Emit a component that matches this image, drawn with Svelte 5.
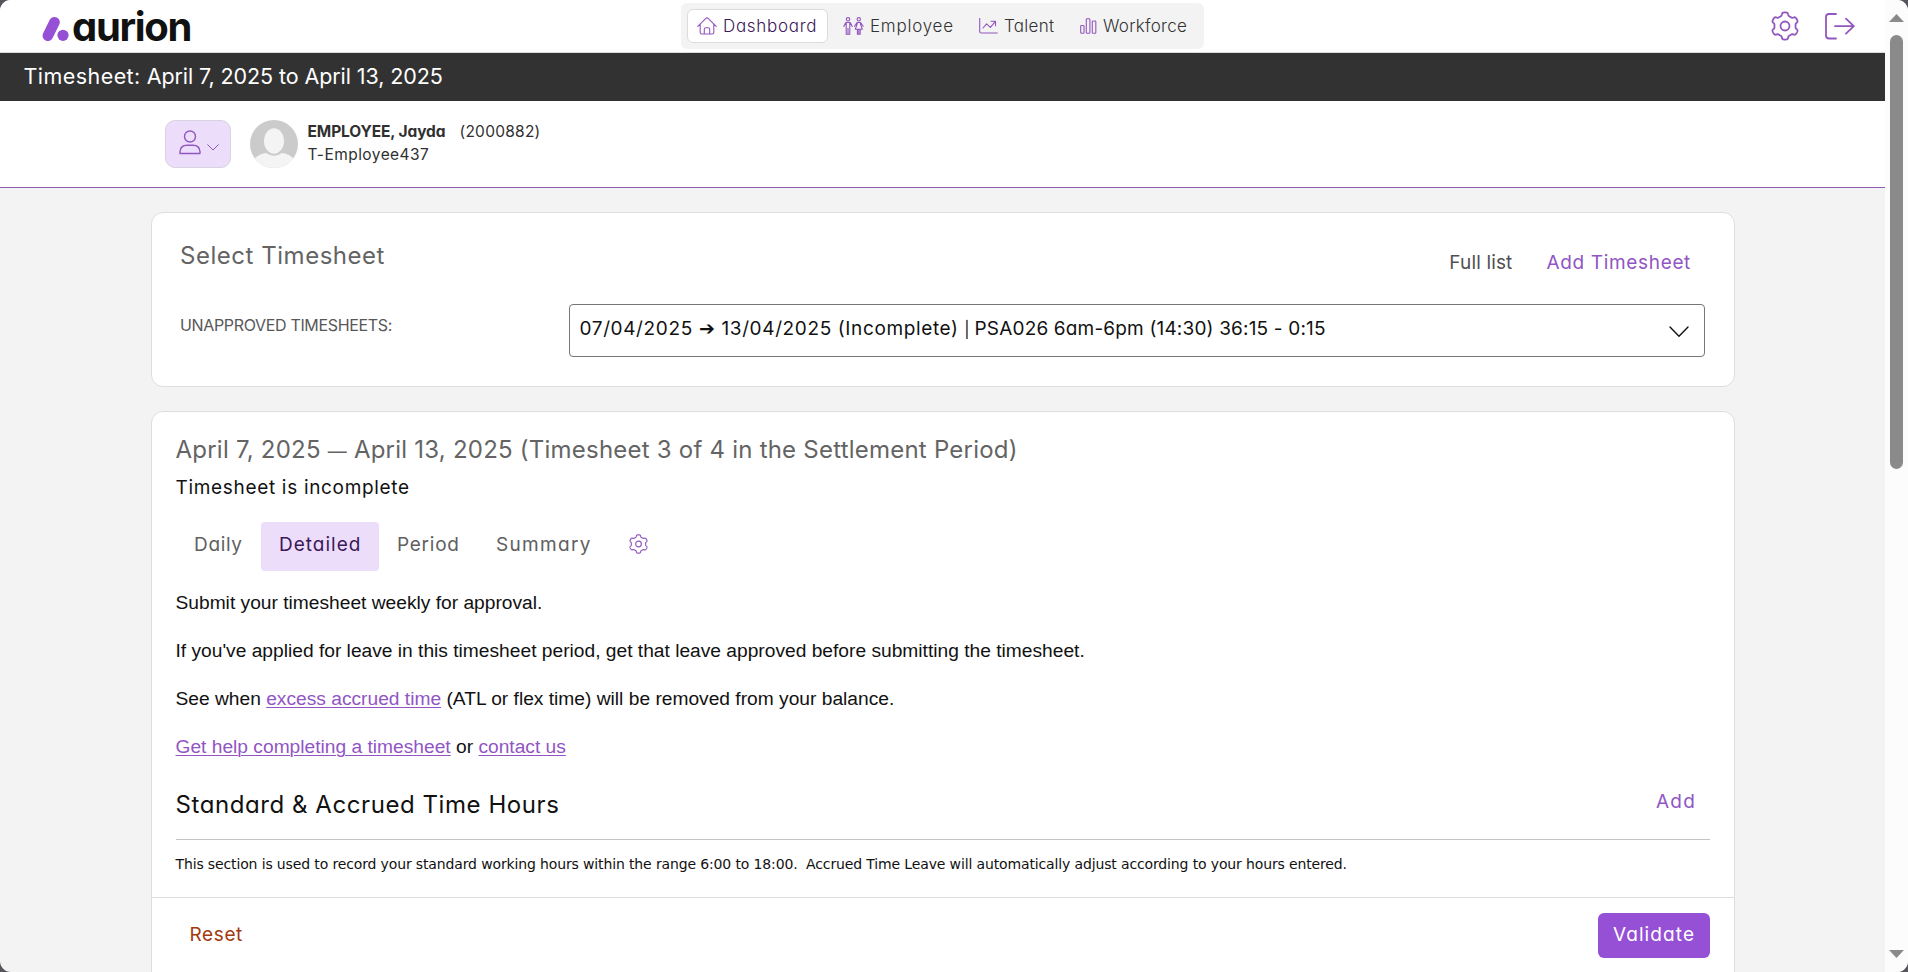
<script>
  // Outline of a six-toothed cog in a 28 x 28 box.
  function cog(radius) {
    const points = [];
    for (let i = 0; i < 180; i++) {
      const a = (i / 180) * Math.PI * 2;
      const r = radius * (0.88 + 0.11 * Math.tanh(2.6 * Math.cos(6 * a)));
      points.push(`${(14 + r * Math.sin(a)).toFixed(2)} ${(14 - r * Math.cos(a)).toFixed(2)}`);
    }
    return `M${points.join('L')}Z`;
  }
  const cogPath = cog(13.7);

  const tabs = [
    { id: 'daily', label: 'Daily' },
    { id: 'detailed', label: 'Detailed' },
    { id: 'period', label: 'Period' },
    { id: 'summary', label: 'Summary' }
  ];
  let active = $state('detailed');
</script>

<div class="window">
  <div class="content">
    <header class="top">
      <div class="logo">
        <svg width="28" height="26" viewBox="0 0 28 26">
          <path d="M5.9 19.7L12.5 6.200" stroke="#9650d6" stroke-width="10.6" stroke-linecap="round" />
          <circle cx="21" cy="19.300" r="5.6" fill="#9650d6" />
        </svg>
        <span>aurion</span>
      </div>
      <nav>
        <a class="item current" href="#dashboard">
          <svg width="20" height="18" viewBox="0 0 20 18"><path d="M.8 9.3L8.9 1.3q1.1-.9 2.2 0L19.2 9.3M3.2 7.3V15.500q0 1.500 1.500 1.500H15.300q1.500 0 1.500-1.500V7.300M7.300 17V12.200q0-1.400 1.400-1.400h2.600q1.400 0 1.400 1.400V17" /></svg>
          <span class="t-dash">Dashboard</span>
        </a>
        <a class="item emp" href="#employee">
          <svg width="21" height="18" viewBox="0 0 21 18"><circle cx="5" cy="2.300" r="1.700" /><circle cx="15.800" cy="2.300" r="1.700" /><path d="M.8 9.500L2.800 5.500H7.200L9.200 9.500M3.200 6V17.300H5V11.300M6.800 6V17.300H5M11.500 9.300L14 5.500H17.600L20.200 9.300M14.300 6.500L12.300 12.300H19.300L17.300 6.500M14.400 12.500V17.300H17.200V12.500M15.800 12.500V17" /></svg>
          <span class="t-emp">Employee</span>
        </a>
        <a class="item tal" href="#talent">
          <svg width="19" height="16" viewBox="0 0 19 16"><path d="M.7.3V13.500q0 1.500 1.500 1.500H18.300M4 10L7.600 5.800L11.400 9.400L16.200 3.600M12 3.300H16.500V7.800" /></svg>
          <span class="t-tal">Talent</span>
        </a>
        <a class="item wrk" href="#workforce">
          <svg width="17" height="16" viewBox="0 0 17 16"><rect x=".7" y="7.500" width="3.300" height="7.700" rx=".8" /><rect x="6.300" y=".7" width="3.600" height="14.500" rx=".8" /><rect x="12.300" y="3" width="3.500" height="12.200" rx=".8" /></svg>
          <span class="t-wrk">Workforce</span>
        </a>
      </nav>
      <div class="actions">
        <svg width="28" height="30" viewBox="0 0 28 28"><path d={cogPath} /><circle cx="14" cy="14" r="4.500" /></svg>
        <svg width="30" height="27" viewBox="0 0 30 27"><path d="M11 1H4Q1 1 1 4V22.500Q1 25.500 4 25.500H11M10 13.200H28.500M21 5.700L28.800 13.200L21 20.700" /></svg>
      </div>
    </header>

    <div class="title"><span>Timesheet:</span> April 7, 2025 to April 13, 2025</div>

    <section class="profile">
      <button class="user" aria-label="Select employee">
        <svg width="22" height="25" viewBox="0 0 22 25"><circle cx="11" cy="6.500" r="5.500" stroke-width="1.400" /><path d="M1 23.500V21.500Q1.500 15.200 8 15.200H14Q20.500 15.200 21 21.500V23.500Z" stroke-width="1.400" /></svg>
        <svg class="chev" width="12" height="7" viewBox="0 0 12 7"><path d="M.7.7L6 6L11.300.7" /></svg>
      </button>
      <svg class="avatar" width="48" height="48" viewBox="0 0 48 48">
        <clipPath id="disc"><circle cx="24" cy="24" r="24" /></clipPath>
        <g clip-path="url(#disc)">
          <rect width="48" height="48" fill="#cbcbcb" />
          <path d="M3 50V40Q8 34 16 33Q24 38.500 32 33Q40 34 45 40V50Z" fill="#f4f4f4" />
          <ellipse cx="24" cy="21" rx="10.800" ry="13.500" fill="#f4f4f4" stroke="#cbcbcb" stroke-width="1.600" />
        </g>
      </svg>
      <div class="who">
        <div><strong>EMPLOYEE, Jayda</strong><span class="num">(2000882)</span></div>
        <div class="login">T-Employee437</div>
      </div>
    </section>

    <main>
      <section class="card picker">
        <div class="head">
          <h2>Select Timesheet</h2>
          <div class="links"><a class="full" href="#list">Full list</a><a class="addts" href="#add">Add Timesheet</a></div>
        </div>
        <div class="field">
          <span class="label">UNAPPROVED TIMESHEETS:</span>
          <div class="select">
            <div class="value"><span class="range">07/04/2025 ➔ 13/04/2025 (Incomplete)</span> <span class="bar">|</span> <span>PSA026 6am-6pm (14:30) 36:15 - 0:15</span></div>
            <svg width="20" height="12" viewBox="0 0 20 12"><path d="M1 1L10 10.300L19 1" /></svg>
          </div>
        </div>
      </section>

      <section class="card sheet">
        <div class="body">
          <h2>April 7, 2025 <span class="dash">—</span> April 13, 2025 (Timesheet 3 of 4 in the Settlement Period)</h2>
          <p class="status">Timesheet is incomplete</p>
          <div class="tabs">
            {#each tabs as tab}
              <button class="tab {tab.id}" class:on={active === tab.id} onclick={() => (active = tab.id)}>{tab.label}</button>
            {/each}
            <svg width="19" height="20" viewBox="0 0 28 28"><path d={cogPath} /><circle cx="14" cy="14" r="4.200" /></svg>
          </div>
          <div class="notes">
            <p>Submit your timesheet weekly for approval.</p>
            <p>If you've applied for leave in this timesheet period, get that leave approved before submitting the timesheet.</p>
            <p>See when <a href="#excess">excess accrued time</a> (ATL or flex time) will be removed from your balance.</p>
            <p><a href="#help">Get help completing a timesheet</a> or <a href="#contact">contact us</a></p>
          </div>
          <div class="hours">
            <h3>Standard &amp; Accrued Time Hours</h3>
            <a href="#add-hours">Add</a>
          </div>
          <p class="small">This section is used to record your standard working hours within the range 6:00 to 18:00.&nbsp; Accrued Time Leave will automatically adjust according to your hours entered.</p>
        </div>
        <footer>
          <button class="reset">Reset</button>
          <button class="validate">Validate</button>
        </footer>
      </section>
    </main>
  </div>

  <div class="scrollbar">
    <svg width="15" height="8" viewBox="0 0 15 8"><path d="M0 8L7.500 0L15 8Z" /></svg>
    <div class="track"><div class="thumb"></div></div>
    <svg width="15" height="8" viewBox="0 0 15 8"><path d="M0 0L7.500 8L15 0Z" /></svg>
  </div>
</div>

<style>
  :global(body) { margin: 0; background: #56555c; overflow: hidden; }
  .window, .window * { box-sizing: border-box; }
  .window { display: flex; height: 972px; border-radius: 11px; overflow: hidden; background: #f3f3f3; font-family: Inter, "Liberation Sans", sans-serif; font-feature-settings: "cv11"; font-weight: 390; color: #111; font-size: 19px; }
  svg { display: block; flex: none; fill: none; stroke: #9257bf; stroke-width: 1.3; stroke-linecap: round; stroke-linejoin: round; }
  button { font: inherit; font-feature-settings: inherit; border: 0; background: none; padding: 0; color: inherit; cursor: pointer; }
  a { color: #9155c4; text-decoration: none; }
  h2, h3, p { margin: 0; font-weight: inherit; }
  .content { flex: 1; min-width: 0; display: flex; flex-direction: column; }

  .top { flex: none; height: 53px; background: #fff; border-bottom: 1px solid #d8dddb; display: grid; grid-template-columns: 1fr 523px 1fr; align-items: start; }
  .logo { display: flex; align-items: flex-start; padding: 16px 0 0 42px; }
  .logo svg { stroke: none; }
  .logo span { margin: -14.500px 0 0 2px; font-size: 40px; line-height: 50px; height: 50px; font-weight: 700; letter-spacing: -1.3px; color: #111; }
  nav { height: 46px; margin-top: 3px; border-radius: 6px; background: #f3f3f3; display: flex; align-items: center; padding-left: 6px; font-size: 17px; font-weight: 360; }
  .item { display: flex; align-items: center; height: 34px; color: #333; white-space: nowrap; }
  .item svg { stroke-width: 1.1; }
  .item span { padding-left: 6px; }
  .current { width: 141px; padding-left: 9px; border: 1px solid #dcdcdc; border-radius: 6px; background: #fff; color: #3c1859; }
  .emp { margin-left: 15px; width: 136px; }
  .tal { width: 101px; }
  .t-dash { letter-spacing: .7px; }
  .t-emp { letter-spacing: .75px; }
  .t-tal { letter-spacing: .3px; }
  .t-wrk { letter-spacing: .27px; }
  .actions { justify-self: end; display: flex; align-items: center; gap: 26px; height: 52px; padding-right: 30px; }
  .actions svg { stroke-width: 1.8; }

  .title { flex: none; height: 48px; padding: 0 0 1px 23.500px; background: #323232; color: #fff; font-size: 21.500px; font-weight: 400; line-height: 47px; letter-spacing: -.09px; }
  .title span { letter-spacing: .44px; }
  .profile { flex: none; height: 87px; background: #fff; border-bottom: 1px solid #8f5bb0; display: flex; padding: 19px 0 0 165px; font-size: 15.500px; font-weight: 375; color: #303030; }
  .user { width: 66px; height: 48px; border: 1px solid #d9d2e2; border-radius: 10px; background: #ecdefb; display: flex; align-items: flex-start; padding: 9px 0 0 13px; gap: 6px; }
  .chev { margin-top: 14px; stroke-width: 1; }
  .avatar { margin-left: 19px; stroke: none; }
  .who { padding-left: 9.500px; line-height: 23px; }
  .who strong { font-weight: 650; letter-spacing: -.1px; }
  .num { padding-left: 14px; letter-spacing: .26px; }
  .login { letter-spacing: .45px; }

  main { padding: 24px 150px 0 151px; display: flex; flex-direction: column; gap: 24px; }
  .card { background: #fff; border: 1px solid #dedede; border-radius: 12px; }
  .picker { height: 175px; padding: 0 29px 0 28px; }
  .head { height: 91px; display: flex; justify-content: space-between; }
  .head h2 { padding-top: 28px; font-size: 24px; line-height: 30px; letter-spacing: .53px; color: #646464; }
  .links { padding: 35px 14px 0 0; display: flex; gap: 34px; line-height: 30px; }
  .full { color: #505050; letter-spacing: .15px; }
  .addts { letter-spacing: .66px; }
  .field { display: flex; justify-content: space-between; }
  .label { padding-top: 11px; font-size: 16px; line-height: 20px; letter-spacing: -.34px; color: #585858; }
  .select { width: 1136px; height: 53px; border: 1px solid #777; border-radius: 4px; display: flex; justify-content: space-between; padding: 0 15px 0 9.500px; line-height: 48px; letter-spacing: .17px; white-space: nowrap; }
  .range { letter-spacing: .63px; }
  .bar { font-size: 16px; line-height: 0; letter-spacing: -.5px; }
  .select svg { margin-top: 21px; stroke: #111; stroke-width: 1.400; }

  .sheet { height: 700px; }
  .body { height: 485px; padding: 23px 24px 0 23.500px; }
  .body h2 { font-size: 24px; line-height: 30px; letter-spacing: .225px; color: #646464; }
  .dash { font-size: 19px; line-height: 0; }
  .status { margin-top: 9px; line-height: 28px; letter-spacing: .68px; }
  .tabs { margin-top: 20px; height: 49px; display: flex; }
  .tab { height: 49px; padding: 0 0 5px 18.500px; text-align: left; color: #606060; border-radius: 4px; }
  .tab.on { background: #ecdefb; color: #3c1859; }
  .daily { width: 85px; letter-spacing: .68px; }
  .detailed { width: 118px; letter-spacing: 1px; }
  .period { width: 99px; letter-spacing: .75px; }
  .summary { width: 151px; letter-spacing: 1.320px; }
  .tabs svg { margin-top: 12px; stroke-width: 1.700; }
  .notes { margin-top: 20px; display: flex; flex-direction: column; gap: 24px; font: 19.200px/24px "Liberation Sans", Arial, sans-serif; }
  .notes a { text-decoration: underline; text-decoration-thickness: 1px; text-underline-offset: 2px; }
  .hours { margin-top: 31px; height: 50px; border-bottom: 1px solid #c4c4c4; display: flex; justify-content: space-between; padding-right: 14px; }
  .hours h3 { font-size: 24px; line-height: 30px; letter-spacing: .57px; }
  .hours a { line-height: 24px; letter-spacing: 1.200px; }
  .small { margin-top: 14px; font: 14px/20px "DejaVu Sans", Verdana, sans-serif; letter-spacing: -.137px; white-space: nowrap; }
  footer { border-top: 1px solid #dedede; padding: 15px 24px 0 37.500px; display: flex; justify-content: space-between; }
  footer button { height: 45px; padding-bottom: 2px; }
  .reset { color: #a33a10; letter-spacing: .62px; }
  .validate { width: 112px; border-radius: 6px; background: #9650d6; color: #fff; letter-spacing: 1.100px; }

  .scrollbar { flex: none; width: 23px; background: #fcfcfc; display: flex; flex-direction: column; align-items: center; padding: 14px 0; }
  .scrollbar svg { fill: #8a8a8a; stroke: none; }
  .track { flex: 1; padding-top: 13px; }
  .thumb { width: 13px; height: 434px; border-radius: 7px; background: #8a8a8a; }
</style>
